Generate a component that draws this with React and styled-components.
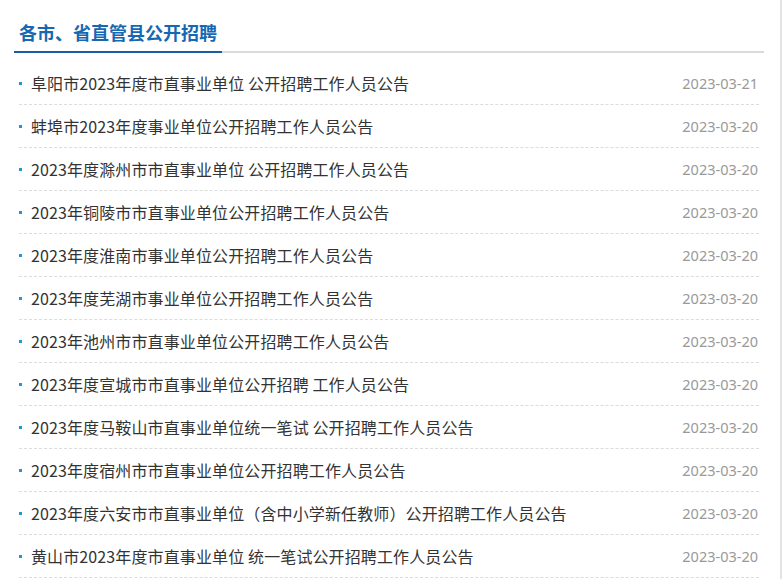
import React from "react";
import styled, { createGlobalStyle } from "styled-components";

const Global = createGlobalStyle`
  html, body { margin: 0; padding: 0; background: #fff; }
  body { font-family: "Microsoft YaHei", "Noto Sans CJK SC", "Noto Sans", sans-serif; }
`;

const Panel = styled.div`
  box-sizing: border-box;
  width: 782px;
  height: 579px;
  overflow: hidden;
  padding-left: 14px;
  border-right: 2px solid #e4e4e4;
`;

const Header = styled.div`
  margin-right: 16px;
  border-bottom: 2px solid #dadada;
  height: 51px;
  display: flex;
  align-items: flex-end;
`;

const Title = styled.h2`
  margin: 0 0 -2px 0;
  padding: 10px 5px 0 5px;
  height: 51px;
  box-sizing: border-box;
  display: flex;
  align-items: center;
  border-bottom: 2px solid #165fa6;
  font-size: 18px;
  font-weight: 700;
  color: #1668b2;
`;

const List = styled.ul`
  list-style: none;
  margin: 9px 21px 0 5px;
  padding: 0;
`;

const Row = styled.li`
  height: 42px;
  display: flex;
  align-items: center;
  border-bottom: 1px dashed #dcdcdc;
`;

const Bullet = styled.span`
  width: 3px;
  height: 3px;
  background: #179bd7;
  margin-right: 9px;
  flex-shrink: 0;
`;

const Link = styled.span`
  flex: 1;
  font-size: 16px;
  letter-spacing: 0.12px;
  color: #333;
  white-space: nowrap;
`;

const Date = styled.span`
  font-size: 14.5px;
  color: #999;
  font-family: "Microsoft YaHei", "Noto Sans", sans-serif;
  margin-right: 1px;
`;

const items = [
  ["阜阳市2023年度市直事业单位 公开招聘工作人员公告", "2023-03-21"],
  ["蚌埠市2023年度事业单位公开招聘工作人员公告", "2023-03-20"],
  ["2023年度滁州市市直事业单位 公开招聘工作人员公告", "2023-03-20"],
  ["2023年铜陵市市直事业单位公开招聘工作人员公告", "2023-03-20"],
  ["2023年度淮南市事业单位公开招聘工作人员公告", "2023-03-20"],
  ["2023年度芜湖市事业单位公开招聘工作人员公告", "2023-03-20"],
  ["2023年池州市市直事业单位公开招聘工作人员公告", "2023-03-20"],
  ["2023年度宣城市市直事业单位公开招聘 工作人员公告", "2023-03-20"],
  ["2023年度马鞍山市直事业单位统一笔试 公开招聘工作人员公告", "2023-03-20"],
  ["2023年度宿州市市直事业单位公开招聘工作人员公告", "2023-03-20"],
  ["2023年度六安市市直事业单位（含中小学新任教师）公开招聘工作人员公告", "2023-03-20"],
  ["黄山市2023年度市直事业单位 统一笔试公开招聘工作人员公告", "2023-03-20"],
];

export default function App() {
  return (
    <>
      <Global />
      <Panel>
        <Header>
          <Title>各市、省直管县公开招聘</Title>
        </Header>
        <List>
          {items.map(([t, d], i) => (
            <Row key={i}>
              <Bullet />
              <Link>{t}</Link>
              <Date>{d}</Date>
            </Row>
          ))}
        </List>
      </Panel>
    </>
  );
}
